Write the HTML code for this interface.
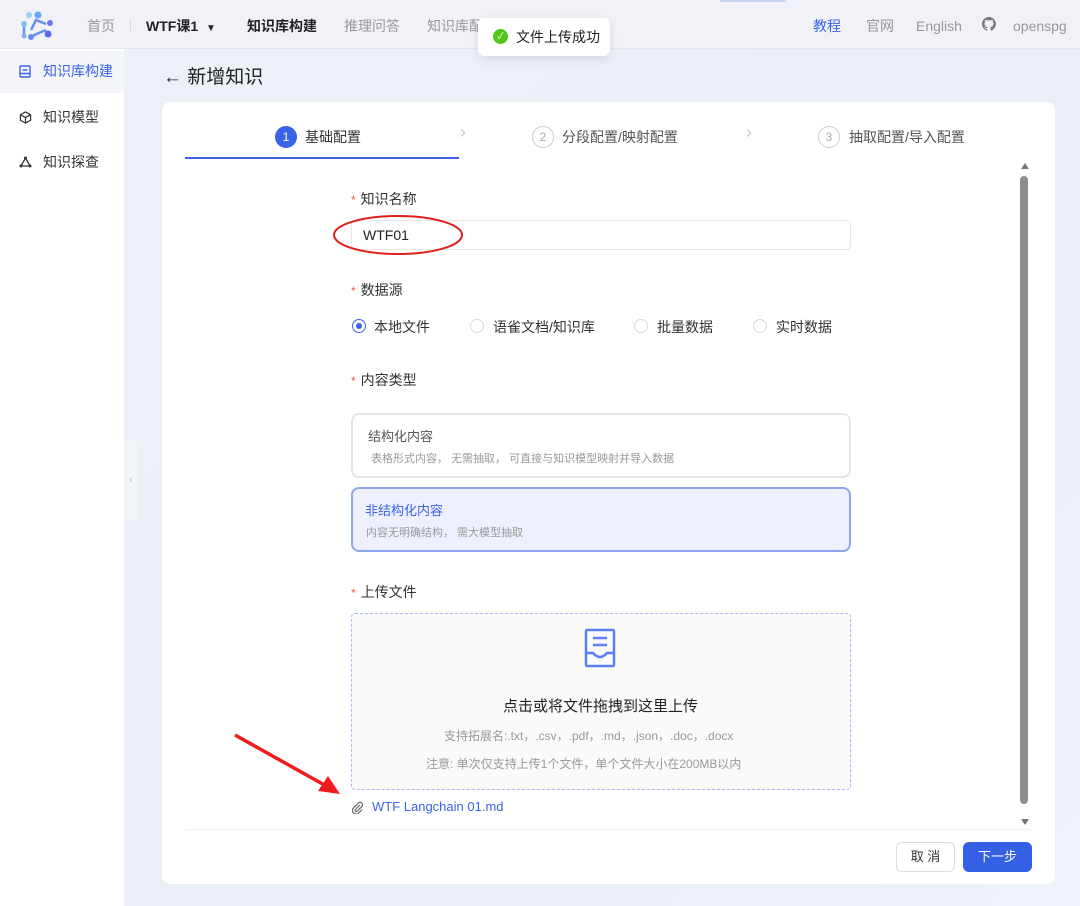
<!DOCTYPE html>
<html><head><meta charset="utf-8"><style>
*{box-sizing:border-box;margin:0;padding:0}
body{width:1080px;height:906px;overflow:hidden;background:linear-gradient(135deg,#eef1f7,#e9eef7 60%,#eef2f9);font-family:"Liberation Sans","Noto Sans CJK SC",sans-serif;position:relative;color:#333}
.a{position:absolute}
.top{left:0;top:0;width:1080px;height:49px;border-bottom:1px solid #e2e6ee;background:#f0f2f8}
.nav{font-size:14px;color:#999;top:16px}
.side{left:0;top:49px;width:124px;height:857px;background:#fff}
.si{left:0;width:124px;height:42px;font-size:14px;color:#333;line-height:42px;padding-left:43px}
.card{left:162px;top:102px;width:893px;height:782px;background:#fff;border-radius:8px}
.lab{font-size:14px;color:#333}
.lab b{color:#f5554a;font-weight:normal;margin-right:5px;font-size:12px}
.radio{width:14px;height:14px;border:1px solid #d9d9d9;border-radius:50%}
.rt{font-size:14px;color:#333}
.step{font-size:14px;color:#555;top:127px}
.num{width:22px;height:22px;border-radius:50%;border:1px solid #ccc;font-size:12px;color:#aaa;text-align:center;line-height:20px}
</style></head><body>
<div class="a top"></div>
<div class="a" style="left:720px;top:0;width:66px;height:2px;background:#c9d4f4"></div>
<svg class="a" style="left:17px;top:10px" width="40" height="32" viewBox="0 0 40 32">
<g stroke="#6b8cf0" stroke-width="2.5" fill="none"><path d="M7 16v10M14 20l5-10 10 4M15 26l14-6"/></g>
<circle cx="7" cy="14" r="3" fill="#7fc4f0"/><circle cx="12" cy="5" r="3" fill="#9bd4f5"/><circle cx="21" cy="5" r="3.5" fill="#6aa8f0"/><circle cx="33" cy="13" r="3" fill="#6a78ee"/><circle cx="31" cy="24" r="3.5" fill="#5a6ae8"/><circle cx="14" cy="27" r="3" fill="#6a8af0"/><circle cx="7" cy="26" r="2.5" fill="#7fb4f0"/>
</svg>
<div class="a nav" style="left:87px">首页</div>
<div class="a" style="left:130px;top:19px;width:1px;height:14px;background:#ddd"></div>
<div class="a nav" style="left:146px;color:#222;font-weight:bold">WTF课1 <span style="font-size:10px;margin-left:4px">▼</span></div>
<div class="a nav" style="left:247px;color:#222;font-weight:bold">知识库构建</div>
<div class="a nav" style="left:344px">推理问答</div>
<div class="a nav" style="left:427px">知识库配</div>
<div class="a nav" style="left:813px;color:#3a63e8">教程</div>
<div class="a nav" style="left:866px">官网</div>
<div class="a nav" style="left:916px;top:18px">English</div>
<svg class="a" style="left:982px;top:17px" width="14" height="14" viewBox="0 0 16 16"><path fill="#777" d="M8 0a8 8 0 0 0-2.5 15.6c.4 0 .5-.2.5-.4v-1.5c-2.2.5-2.7-1-2.7-1-.4-.9-.9-1.2-.9-1.2-.7-.5.1-.5.1-.5.8.1 1.2.8 1.2.8.7 1.3 1.9.9 2.3.7.1-.5.3-.9.5-1.1-1.800-.2-3.600-.9-3.600-4 0-.9.3-1.6.8-2.1-.1-.2-.4-1 .1-2.1 0 0 .7-.2 2.2.8a7.5 7.5 0 0 1 4 0c1.5-1 2.2-.8 2.2-.8.4 1.1.2 1.9.1 2.1.5.6.8 1.3.8 2.1 0 3.1-1.9 3.8-3.7 4 .3.3.6.8.6 1.5v2.2c0 .2.1.5.6.4A8 8 0 0 0 8 0z"/></svg>
<div class="a nav" style="left:1013px;top:18px">openspg</div>

<div class="a" style="left:478px;top:18px;width:132px;height:38px;background:#fff;border-radius:6px;box-shadow:0 3px 10px rgba(0,0,0,.1)"></div>
<div class="a" style="left:493px;top:29px;width:15px;height:15px;border-radius:50%;background:#52c41a;color:#fff;font-size:9px;text-align:center;line-height:15px">✓</div>
<div class="a" style="left:516px;top:27px;font-size:14px;color:#222">文件上传成功</div>

<div class="a side"></div>
<div class="a si" style="top:51px;background:#f3f5f9;color:#3a63e8;line-height:40px">知识库构建</div>
<svg class="a" style="left:19px;top:65px" width="12" height="13" viewBox="0 0 12 13"><g fill="none" stroke="#3a63e8" stroke-width="1.4"><rect x="1" y="1" width="10" height="11" rx="1"/><path d="M3.5 5h5M1 8.5h10"/></g></svg>
<div class="a si" style="top:97px;line-height:40px">知识模型</div>
<svg class="a" style="left:19px;top:111px" width="13" height="13" viewBox="0 0 14 14"><g fill="none" stroke="#333" stroke-width="1.3"><path d="M7 1l5.5 3v6L7 13 1.5 10V4z M1.5 4L7 7l5.5-3M7 7v6"/></g></svg>
<div class="a si" style="top:142px;line-height:40px">知识探查</div>
<svg class="a" style="left:19px;top:156px" width="13" height="12" viewBox="0 0 13 12"><g fill="none" stroke="#333" stroke-width="1.3"><path d="M6.5 2L2 10M6.5 2L11 10M2 10h9"/></g><circle cx="6.5" cy="2" r="1.5" fill="#333"/><circle cx="2" cy="10" r="1.5" fill="#333"/><circle cx="11" cy="10" r="1.5" fill="#333"/></svg>
<div class="a" style="left:124px;top:440px;width:14px;height:80px;background:#f3f5f9;border-radius:0 8px 8px 0;color:#bbb;font-size:11px;line-height:80px;text-align:center">‹</div>

<div class="a" style="left:163px;top:62px;font-size:19px;color:#222">←&nbsp;新增知识</div>

<div class="a card"></div>
<div class="a" style="left:185px;top:157px;width:274px;height:2px;background:#3a63e8"></div>
<div class="a num" style="left:275px;top:126px;background:#3a63e8;border-color:#3a63e8;color:#fff">1</div>
<div class="a step" style="left:305px;color:#333">基础配置</div>
<div class="a" style="left:460px;top:122px;color:#ccc;font-size:18px">›</div>
<div class="a num" style="left:532px;top:126px">2</div>
<div class="a step" style="left:562px">分段配置/映射配置</div>
<div class="a" style="left:746px;top:122px;color:#ccc;font-size:18px">›</div>
<div class="a num" style="left:818px;top:126px">3</div>
<div class="a step" style="left:849px">抽取配置/导入配置</div>

<div class="a" style="left:1021px;top:163px;width:0;height:0;border:4px solid transparent;border-bottom:6px solid #777;border-top:0"></div>
<div class="a" style="left:1020px;top:176px;width:8px;height:628px;background:#8f8f8f;border-radius:4px"></div>
<div class="a" style="left:1021px;top:819px;width:0;height:0;border:4px solid transparent;border-top:6px solid #777;border-bottom:0"></div>

<div class="a lab" style="left:351px;top:189px"><b>*</b>知识名称</div>
<div class="a" style="left:351px;top:220px;width:500px;height:30px;border:1px solid #e8e8e8;border-radius:4px;padding-left:11px;line-height:28px;font-size:14px;color:#222">WTF01</div>
<div class="a lab" style="left:351px;top:280px"><b>*</b>数据源</div>
<div class="a radio" style="left:352px;top:319px;border-color:#3a63e8;padding:3px"><div style="width:6px;height:6px;border-radius:50%;background:#3a63e8"></div></div>
<div class="a rt" style="left:374px;top:317px">本地文件</div>
<div class="a radio" style="left:470px;top:319px"></div>
<div class="a rt" style="left:493px;top:317px">语雀文档/知识库</div>
<div class="a radio" style="left:634px;top:319px"></div>
<div class="a rt" style="left:657px;top:317px">批量数据</div>
<div class="a radio" style="left:753px;top:319px"></div>
<div class="a rt" style="left:776px;top:317px">实时数据</div>
<div class="a lab" style="left:351px;top:370px"><b>*</b>内容类型</div>
<div class="a" style="left:351px;top:413px;width:500px;height:65px;border:2px solid #e4e4e4;border-radius:8px"></div>
<div class="a" style="left:368px;top:426px;font-size:13px;color:#555">结构化内容</div>
<div class="a" style="left:371px;top:450px;font-size:11px;color:#999">表格形式内容， 无需抽取， 可直接与知识模型映射并导入数据</div>
<div class="a" style="left:351px;top:487px;width:500px;height:65px;border:2px solid #8ca6f0;border-radius:8px;background:#eef1fd"></div>
<div class="a" style="left:365px;top:500px;font-size:13px;color:#3a63e8">非结构化内容</div>
<div class="a" style="left:366px;top:524px;font-size:11px;color:#999">内容无明确结构， 需大模型抽取</div>
<div class="a lab" style="left:351px;top:582px"><b>*</b>上传文件</div>
<div class="a" style="left:351px;top:613px;width:500px;height:177px;border:1px dashed #a9bcf2;border-radius:4px;background:#fafafa"></div>
<svg class="a" style="left:584px;top:628px" width="32" height="40" viewBox="0 0 32 40"><g fill="none" stroke="#5b7ff0" stroke-width="2.5"><rect x="2" y="2" width="28" height="36" rx="1"/><path d="M9 10h14M9 17h14M2 25h7q7 8 14 0h7"/></g></svg>
<div class="a" style="left:503px;top:695px;font-size:15px;color:#222">点击或将文件拖拽到这里上传</div>
<div class="a" style="left:444px;top:727px;font-size:12px;color:#999">支持拓展名:.txt，.csv，.pdf，.md，.json，.doc，.docx</div>
<div class="a" style="left:426px;top:755px;font-size:12px;color:#999">注意: 单次仅支持上传1个文件，单个文件大小在200MB以内</div>
<svg class="a" style="left:351px;top:801px" width="13" height="13" viewBox="0 0 13 13"><path d="M9 4L4.5 8.5a1.2 1.2 0 0 0 1.7 1.7L11 5.4a2.5 2.5 0 0 0-3.5-3.5L2.5 6.9a3.6 3.6 0 0 0 5.1 5.1L11 8.6" fill="none" stroke="#666" stroke-width="1.2"/></svg>
<div class="a" style="left:372px;top:799px;font-size:13px;color:#3a63e8">WTF Langchain 01.md</div>

<div class="a" style="left:185px;top:829px;width:846px;height:1px;background:#f0f0f0"></div>
<div class="a" style="left:896px;top:842px;width:59px;height:30px;border:1px solid #ddd;border-radius:6px;font-size:13px;text-align:center;line-height:28px;color:#333">取 消</div>
<div class="a" style="left:963px;top:842px;width:69px;height:30px;background:#3460e6;border-radius:6px;font-size:13px;text-align:center;line-height:30px;color:#fff">下一步</div>

<svg class="a" style="left:0;top:0" width="1080" height="906">
<ellipse cx="398" cy="235" rx="64" ry="19" fill="none" stroke="#e0201a" stroke-width="2"/>
<line x1="235" y1="735" x2="328" y2="787" stroke="#ee1c1c" stroke-width="3.5"/>
<polygon points="340,794 318,791 328,776" fill="#ee1c1c"/>
</svg>
</body></html>
